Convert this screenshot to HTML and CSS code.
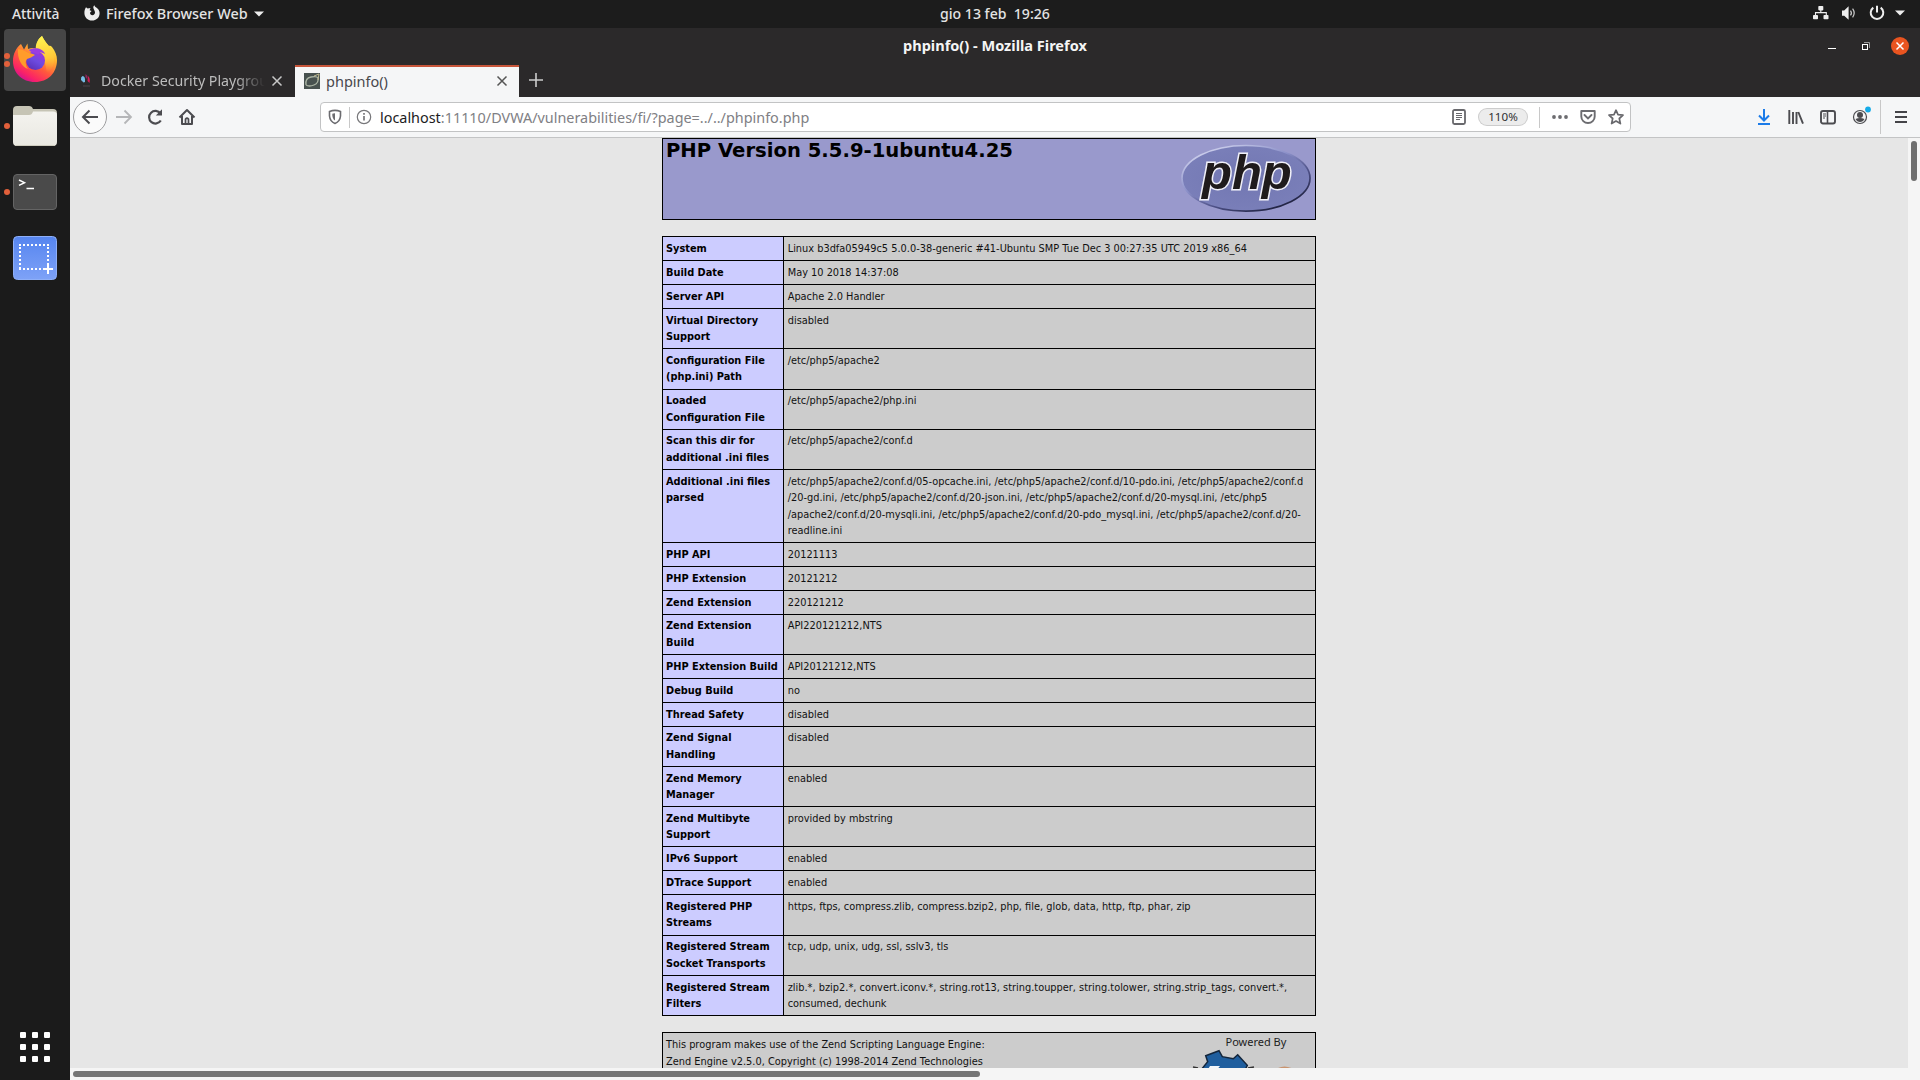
FILE: index.html
```html
<!DOCTYPE html>
<html lang="it">
<head>
<meta charset="utf-8">
<title>phpinfo() - Mozilla Firefox</title>
<link rel="stylesheet" href="styles.css">
</head>
<body>
<div class="desktop">
  <header class="topbar">
    <div class="top-left">
      <span class="activities">Attività</span>
      <svg class="ff-mono" width="16" height="16" viewBox="0 0 16 16"><path d="M2 2.2 3.6 3.6 6.5 3 5.6 5.2 7.6 6 6 7.8C6 9.3 7 10.2 8.4 10.2 10 10.2 11 9 11 7.6 11 5.6 9.4 4.6 9.3 2.6 9.3 1.5 9.8.6 10.4.2 10.7 1.6 12 2.2 13.2 3.2 14.8 4.6 15.6 6.2 15.6 8.3 15.6 12.6 12.4 15.6 8 15.6 3.7 15.6.4 12.3.4 8 .4 5.6 1 3.6 2 2.2Z" fill="#eee"/></svg>
      <span class="app-name">Firefox Browser Web</span>
      <svg class="caret" width="10" height="6" viewBox="0 0 10 6"><path d="M0 .5h10L5 5.5Z" fill="#eee"/></svg>
    </div>
    <div class="clock">gio 13 feb&nbsp; 19:26</div>
    <div class="top-right">
      <svg width="16" height="16" viewBox="0 0 16 16" fill="#eee"><rect x="5.3" y="1" width="5" height="4.4" rx=".8"/><rect x="0" y="10" width="5" height="4.3" rx=".8"/><rect x="10.5" y="10" width="5" height="4.3" rx=".8"/><path d="M2.5 10V7.6h10.8V10M7.8 5v2.6" fill="none" stroke="#eee" stroke-width="1.1"/></svg>
      <svg width="16" height="16" viewBox="0 0 16 16"><path d="M1 5.5h2.2L7.6 1.3v13.4L3.2 10.8H1Z" fill="#eee"/><path d="M9.5 5.6q1.8 2.4 0 4.8M11.6 3.6q3.2 4.4 0 8.8" fill="none" stroke="#ccc" stroke-width="1.2"/></svg>
      <svg width="16" height="16" viewBox="0 0 16 16" fill="none" stroke="#eee" stroke-width="2"><path d="M4.3 2.6A6.3 6.3 0 1 0 11.7 2.6M8 .8V7.5"/></svg>
      <svg class="last" width="10" height="6" viewBox="0 0 10 6"><path d="M0 .5h10L5 5.5Z" fill="#eee"/></svg>
    </div>
  </header>
  <div class="workspace">
    <nav class="dock">
      <div class="tile active">
        <span class="dots"><i></i><i></i></span>
        <svg class="firefox" width="46" height="48" viewBox="0 0 46 48">
          <defs>
            <linearGradient id="fox" x1=".85" y1=".1" x2=".3" y2="1"><stop offset="0" stop-color="#fff44f"/><stop offset=".3" stop-color="#ffb52e"/><stop offset=".6" stop-color="#ff5a3c"/><stop offset=".85" stop-color="#fb2465"/><stop offset="1" stop-color="#d5128f"/></linearGradient>
            <linearGradient id="flame" x1=".5" y1="0" x2=".6" y2="1"><stop offset="0" stop-color="#fff44f"/><stop offset=".6" stop-color="#ffc93a"/><stop offset="1" stop-color="#ffa130" stop-opacity="0"/></linearGradient>
            <linearGradient id="globe" x1=".8" y1="0" x2=".2" y2="1"><stop offset="0" stop-color="#a531dc"/><stop offset=".5" stop-color="#6d4be0"/><stop offset="1" stop-color="#5a2fb5"/></linearGradient>
          </defs>
          <path d="M9 9 12 14.500 15.500 8.500 16 14C20 12.500 23 13 25 14 24 8 26 4 30 1 32 5 34 8 37 11 38 10.500 39 11 40 12 43 16 45 20 45 25 45 38 36 47 23 47 10 47 1 38 1 26 1 19 4 13 9 9Z" fill="url(#fox)"/>
          <path d="M24 15C23 9 26 4 30 1 32 6 37 10 40 16 44 24 42 34 35 38 33 28 33 20 24 15Z" fill="url(#flame)"/>
          <circle cx="23.500" cy="25.500" r="9.500" fill="url(#globe)"/>
          <path d="M17 15C22 12 31 13 33 19 30 17 28 18 27 17 28 19 27 20 25 19 22 17 19 18 17 15Z" fill="#9a3de0"/>
          <path d="M6 14C11 14 14 17 17 18 19 18.500 21 18.500 23 20 20 22 18 23 15 24 13 27 14 31 16 34 10 32 5 24 6 14Z" fill="#ff9c2a"/>
          <path d="M14 25C13 33 21 38 28 35 21 38 12 34 14 25Z" fill="#ff5a3c"/>
        </svg>
      </div>
      <div class="tile">
        <span class="dots"><i></i></span>
        <svg width="46" height="42" viewBox="0 0 46 42"><defs><linearGradient id="fold" x1="0" y1="0" x2="0" y2="1"><stop offset="0" stop-color="#f4f3ef"/><stop offset="1" stop-color="#e9e8e1"/></linearGradient></defs><path d="M1 5Q1 1 5 1H17Q20 1 21 4H41Q45 4 45 8V20H1Z" fill="#c6c4b5"/><path d="M1 10H17Q20 10 21 6.500H41Q45 6.500 45 10V37Q45 41 41 41H5Q1 41 1 37Z" fill="url(#fold)"/><path d="M3 40.500H43" stroke="#cfcdbf"/></svg>
      </div>
      <div class="tile">
        <span class="dots"><i></i></span>
        <svg width="46" height="38" viewBox="0 0 46 38"><rect x="1.500" y="1.500" width="43" height="35" rx="3.500" fill="#4a4a4a" stroke="#646464"/><path d="M7 7 12.500 9.700 7 12.400M14.500 15.500H22" fill="none" stroke="#fff" stroke-width="1.500"/></svg>
      </div>
      <div class="tile">
        <svg width="46" height="46" viewBox="0 0 46 46"><defs><linearGradient id="shot" x1="0" y1="0" x2="0" y2="1"><stop offset="0" stop-color="#5685ef"/><stop offset="1" stop-color="#7ea2f7"/></linearGradient></defs><rect x="1.500" y="1.500" width="43" height="43" rx="4" fill="url(#shot)" stroke="#8eaff8"/><path d="M7 10H37M7 34H32M8 12V34M36 12V30" fill="none" stroke="#fff" stroke-width="2" stroke-dasharray="2 2"/><path d="M36 29V39M31 34H41" stroke="#fff" stroke-width="2"/></svg>
      </div>
      <div class="apps"><i></i><i></i><i></i><i></i><i></i><i></i><i></i><i></i><i></i></div>
    </nav>
    <main class="window">
      <div class="titlebar">
        <span class="window-title">phpinfo() - Mozilla Firefox</span>
        <div class="controls">
          <svg width="10" height="10" viewBox="0 0 10 10"><path d="M1 7.500H9" stroke="#fff"/></svg>
          <svg width="10" height="10" viewBox="0 0 10 10" fill="none"><path d="M3 1.500H8.500V7" stroke="#999"/><rect x="1.500" y="3.500" width="5" height="5" stroke="#fff"/></svg>
          <svg width="18" height="18" viewBox="0 0 18 18"><circle cx="9" cy="9" r="9" fill="#e95420"/><path d="M5.500 5.500 12.500 12.500M12.500 5.500 5.500 12.500" stroke="#fff" stroke-width="1.500"/></svg>
        </div>
      </div>
      <div class="tabs">
        <div class="tab">
          <svg width="16" height="16" viewBox="0 0 16 16"><path d="M3.500 3Q6.500 3 6 9L4.500 9.500 2 7Q1.500 4 3.500 3Z" fill="#73bbe4"/><path d="M6.500 1 8.500 3 8 6 6.500 4Z" fill="#8f245f"/><path d="M9 3Q11.500 5 10.500 10L8.500 8Z" fill="#cf1b58"/><path d="M4 13H11" stroke="#3b3639" stroke-width="2"/></svg>
          <span class="tab-text fade">Docker Security Playground</span>
          <svg class="close" width="12" height="12" viewBox="0 0 12 12"><path d="M1.500 1.500 10.500 10.500M10.500 1.500 1.500 10.500" stroke="#c8c8c8" stroke-width="1.500"/></svg>
        </div>
        <div class="tab selected">
          <svg width="16" height="16" viewBox="0 0 16 16"><rect width="16" height="16" fill="#47514f"/><path d="M2 12Q1 5 7 4T14 5Q15 10 10 12T2 12" fill="none" stroke="#aab4a4" stroke-width="1.300"/><path d="M10 3 15 1 14 7" fill="none" stroke="#c0ba92"/></svg>
          <span class="tab-text">phpinfo()</span>
          <svg class="close" width="12" height="12" viewBox="0 0 12 12"><path d="M1.500 1.500 10.500 10.500M10.500 1.500 1.500 10.500" stroke="#555" stroke-width="1.500"/></svg>
        </div>
        <svg class="newtab" width="16" height="16" viewBox="0 0 16 16"><path d="M8 1V15M1 8H15" stroke="#ccc" stroke-width="1.600"/></svg>
      </div>
      <div class="toolbar">
        <div class="nav-buttons">
          <span class="back"><svg width="18" height="18" viewBox="0 0 18 18" fill="none" stroke="#4c4c50" stroke-width="2"><path d="M17 9H2.500M8.500 2.500 2 9 8.500 15.500"/></svg></span>
          <svg width="18" height="18" viewBox="0 0 18 18" fill="none" stroke="#b5b6b8" stroke-width="1.800"><path d="M1 9H15.500M9.500 2.500 16 9 9.500 15.500"/></svg>
          <svg class="reload" width="18" height="18" viewBox="0 0 18 18" fill="none" stroke="#4c4c50" stroke-width="2.200"><path d="M14.800 12.500A6.300 6.300 0 1 1 14.500 5.500"/><path d="M16 1.200V7.400H9.800Z" fill="#4c4c50" stroke="none"/></svg>
          <svg width="18" height="18" viewBox="0 0 18 18" fill="none" stroke="#4c4c50" stroke-width="2" stroke-linejoin="round"><path d="M1.500 9.500 9 2 16.500 9.500M4 8V16H14V8"/><path d="M7.500 16V11Q9 9.500 10.500 11V16" stroke-width="1.700"/></svg>
        </div>
        <div class="urlbar">
          <svg class="shield" width="14" height="16" viewBox="0 0 14 16" fill="none" stroke="#6c6c70"><path d="M1.500 2.500Q7 .2 12.500 2.500V7Q12 12.500 7 14.500 2 12.500 1.500 7Z" stroke-width="1.600"/><path d="M7 4.200Q5 4.200 4.300 4.700 4 9.500 7 11.500Z" fill="#6c6c70" stroke="none"/></svg>
          <i class="sep"></i>
          <svg class="info" width="16" height="16" viewBox="0 0 16 16" fill="none"><circle cx="8" cy="8" r="6.700" stroke="#77777a" stroke-width="1.200"/><path d="M8 7V11.500M8 4V5.700" stroke="#77777a" stroke-width="1.700"/></svg>
          <span class="url">localhost<span>:11110/DVWA/vulnerabilities/fi/?page=../../phpinfo.php</span></span>
          <svg width="16" height="16" viewBox="0 0 16 16" fill="none" stroke="#68686c"><rect x="2" y="1" width="12" height="14" rx="1.500" stroke-width="1.800"/><path d="M5 4.500H11M5 6.500H11M5 8.500H11M5 10.500H9"/></svg>
          <span class="zoom">110%</span>
          <i class="sep second"></i>
          <svg class="more" width="16" height="16" viewBox="0 0 16 16" fill="#6c6c70"><circle cx="2" cy="8" r="1.900"/><circle cx="8" cy="8" r="1.900"/><circle cx="14" cy="8" r="1.900"/></svg>
          <svg class="pocket" width="16" height="16" viewBox="0 0 16 16" fill="none" stroke="#6c6c70" stroke-width="1.900"><path d="M1.300 2H14.700V7.500A6.700 6.500 0 0 1 1.300 7.500Z" stroke-linejoin="round"/><path d="M4.500 6 8 9.400 11.500 6" stroke-linecap="round"/></svg>
          <svg class="star" width="16" height="16" viewBox="0 0 16 16" fill="none" stroke="#68686c" stroke-width="1.700" stroke-linejoin="round"><path d="M8 1.200 10 5.600 15 6.100 11.300 9.500 12.400 14.600 8 12 3.600 14.600 4.700 9.500 1 6.100 6 5.600Z"/></svg>
        </div>
        <div class="tool-icons">
          <svg width="16" height="16" viewBox="0 0 16 16" fill="none" stroke="#1b7be8" stroke-width="2"><path d="M8 0V11M3 6.500 8 11.500 13 6.500M2 15H14"/></svg>
          <svg width="16" height="16" viewBox="0 0 16 16" fill="none" stroke="#4c4c50" stroke-width="1.900"><path d="M1.300 1V15M5 3V15M8.500 3V15M10.300 3 15 14.700"/></svg>
          <svg width="16" height="16" viewBox="0 0 16 16" fill="none" stroke="#4c4c50"><rect x="1" y="2" width="14" height="12.500" rx="2" stroke-width="1.900"/><path d="M7.500 2V14" stroke-width="1.600"/><path d="M3 5H6M3 7H6M3 9H5"/></svg>
          <svg class="account" width="20" height="20" viewBox="0 0 20 20"><circle cx="9" cy="11" r="6.500" fill="none" stroke="#4c4c50" stroke-width="1.200"/><circle cx="9" cy="9" r="3" fill="#4c4c50"/><path d="M4.500 13Q9 11 13.500 13 12 16 9 16T4.500 13Z" fill="#4c4c50"/><circle cx="17" cy="3.500" r="2.900" fill="#14abe8"/></svg>
          <i class="sep menu-sep"></i>
          <svg width="14" height="14" viewBox="0 0 14 14" stroke="#444448" stroke-width="2"><path d="M1 2H13M1 7H13M1 12H13"/></svg>
        </div>
      </div>
      <div class="viewport">
        <div class="page">
          <section class="banner">
            <h1>PHP Version 5.5.9-1ubuntu4.25</h1>
            <svg width="132" height="70" viewBox="0 0 132 70">
              <defs><radialGradient id="disc" cx=".5" cy=".5" r=".6"><stop offset="0" stop-color="#7277b2"/><stop offset="1" stop-color="#7b80ba"/></radialGradient><linearGradient id="rim" x1=".15" y1="0" x2=".9" y2="1"><stop offset="0" stop-color="#d8daf2"/><stop offset=".4" stop-color="#8a8fc8"/><stop offset=".65" stop-color="#4c4f85"/><stop offset="1" stop-color="#101228"/></linearGradient></defs>
              <ellipse cx="66" cy="34.300" rx="64" ry="32.800" fill="url(#disc)" stroke="url(#rim)" stroke-width="1.700"/>
              <text class="php-word" x="22" y="45">php</text>
            </svg>
          </section>
          <section class="info-table">
            <div class="row"><b>System</b><span>Linux b3dfa05949c5 5.0.0-38-generic #41-Ubuntu SMP Tue Dec 3 00:27:35 UTC 2019 x86_64</span></div>
            <div class="row"><b>Build Date</b><span>May 10 2018 14:37:08</span></div>
            <div class="row"><b>Server API</b><span>Apache 2.0 Handler</span></div>
            <div class="row two"><b>Virtual Directory<br>Support</b><span>disabled</span></div>
            <div class="row two plus"><b>Configuration File<br>(php.ini) Path</b><span>/etc/php5/apache2</span></div>
            <div class="row two high"><b>Loaded<br>Configuration File</b><span>/etc/php5/apache2/php.ini</span></div>
            <div class="row two high"><b>Scan this dir for<br>additional .ini files</b><span>/etc/php5/apache2/conf.d</span></div>
            <div class="row four"><b>Additional .ini files<br>parsed</b><span>/etc/php5/apache2/conf.d/05-opcache.ini, /etc/php5/apache2/conf.d/10-pdo.ini, /etc/php5/apache2/conf.d<br>/20-gd.ini, /etc/php5/apache2/conf.d/20-json.ini, /etc/php5/apache2/conf.d/20-mysql.ini, /etc/php5<br>/apache2/conf.d/20-mysqli.ini, /etc/php5/apache2/conf.d/20-pdo_mysql.ini, /etc/php5/apache2/conf.d/20-<br>readline.ini</span></div>
            <div class="row"><b>PHP API</b><span>20121113</span></div>
            <div class="row"><b>PHP Extension</b><span>20121212</span></div>
            <div class="row"><b>Zend Extension</b><span>220121212</span></div>
            <div class="row two high"><b>Zend Extension<br>Build</b><span>API220121212,NTS</span></div>
            <div class="row"><b>PHP Extension Build</b><span>API20121212,NTS</span></div>
            <div class="row"><b>Debug Build</b><span>no</span></div>
            <div class="row"><b>Thread Safety</b><span>disabled</span></div>
            <div class="row two high"><b>Zend Signal<br>Handling</b><span>disabled</span></div>
            <div class="row two"><b>Zend Memory<br>Manager</b><span>enabled</span></div>
            <div class="row two"><b>Zend Multibyte<br>Support</b><span>provided by mbstring</span></div>
            <div class="row"><b>IPv6 Support</b><span>enabled</span></div>
            <div class="row"><b>DTrace Support</b><span>enabled</span></div>
            <div class="row two plus"><b>Registered PHP<br>Streams</b><span>https, ftps, compress.zlib, compress.bzip2, php, file, glob, data, http, ftp, phar, zip</span></div>
            <div class="row two high"><b>Registered Stream<br>Socket Transports</b><span>tcp, udp, unix, udg, ssl, sslv3, tls</span></div>
            <div class="row two"><b>Registered Stream<br>Filters</b><span>zlib.*, bzip2.*, convert.iconv.*, string.rot13, string.toupper, string.tolower, string.strip_tags, convert.*,<br>consumed, dechunk</span></div>
          </section>
          <section class="zend">
            <p>This program makes use of the Zend Scripting Language Engine:<br>Zend Engine v2.5.0, Copyright (c) 1998-2014 Zend Technologies</p>
            <svg width="129" height="60" viewBox="0 0 129 60">
              <text class="powered" x="39.500" y="12.700">Powered By</text>
              <path d="M15 37 21.700 28.700 19.700 22.700 33 17.700 36.300 23.700 47.300 25.700 51.700 21.700 61.300 32.300 59 37Z" fill="#1f5e9e" stroke="#14263c" stroke-width="1.500"/>
              <path d="M24 33H34L30 38H21Z" fill="#f2f6fa"/><path d="M7 34 12 35M62 35 68 34" stroke="#333" stroke-width="1.500"/>
              <path d="M89 37Q98 30 109 37Z" fill="#c9946f"/>
            </svg>
          </section>
        </div>
        <div class="vscroll"><i></i></div>
        <div class="hscroll"><i></i></div>
      </div>
    </main>
  </div>
</div>
</body>
</html>
```
FILE: styles.css
```css
* { box-sizing: border-box; }
body { margin: 0; overflow: hidden; background: #1b1b1b; font-family: "Noto Sans", "Open Sans", sans-serif; }
svg { display: block; flex: none; }
.desktop { width: 1920px; height: 1080px; display: flex; flex-direction: column; }

.topbar { height: 28px; flex: none; display: grid; grid-template-columns: 940px 1fr auto; background: #1c1c1c; color: #e4e4e4; font-size: 14.4px; font-weight: 500; line-height: 27px; white-space: nowrap; }
.top-left { display: flex; padding-left: 12px; }
.activities { width: 72px; font-size: 13.8px; }
.ff-mono { margin-top: 5px; }
.app-name { width: 154px; padding-left: 6px; }
.caret { margin-top: 11px; }
.clock { font-size: 14.1px; }
.top-right { display: flex; align-items: center; gap: 12px; padding: 0 15px 2px 0; }
.top-right .last { margin-left: -2px; }

.workspace { flex: 1; min-height: 0; display: flex; }
.dock { width: 70px; display: flex; flex-direction: column; align-items: center; padding-top: 1px; background: #1b1b1b; }
.tile { width: 62px; height: 62px; margin-bottom: 4px; display: grid; grid-template-columns: 8px 46px 8px; align-items: center; border-radius: 4px; }
.tile.active { background: #464646; }
.tile > svg { grid-column: 2; }
.firefox { margin-top: -2px; }
.dots { grid-column: 1; display: flex; flex-direction: column; gap: 2px; }
.dots i { width: 6px; height: 6px; border-radius: 50%; background: #e2603b; }
.apps { margin: auto 0 18px; display: grid; grid-template-columns: repeat(3, 6px); gap: 6px; }
.apps i { width: 6px; height: 6px; border-radius: 1px; background: #fff; }

.window { flex: 1; min-width: 0; display: flex; flex-direction: column; background: #2b292a; }
.titlebar { height: 37px; flex: none; display: grid; grid-template-columns: 833px 1fr auto; color: #f5f5f5; }
.window-title { grid-column: 2; font-size: 14.55px; font-weight: 700; line-height: 34px; }
.controls { display: flex; align-items: center; gap: 20px; padding: 0 11px 2px 0; }
.controls svg:first-child { margin-right: 4px; }
.tabs { height: 32px; flex: none; display: flex; }
.tab { width: 225px; display: flex; align-items: center; padding: 0 12px 2px 9px; border-top: 2px solid transparent; color: #bdbdbd; font-size: 14.2px; }
.tab.selected { width: 224px; padding-right: 11px; border-top-color: #c7553a; background: #f5f6f7; color: #48484c; font-size: 14.5px; }
.tab-text { flex: 1; margin-left: 6px; overflow: hidden; white-space: nowrap; line-height: 24px; }
.tab:first-child .tab-text { margin-right: 6px; }
.fade { -webkit-mask-image: linear-gradient(to right, #000 82%, transparent); mask-image: linear-gradient(to right, #000 82%, transparent); }
.newtab { margin: 7px 0 0 9px; }

.toolbar { height: 41px; flex: none; display: flex; align-items: center; padding: 0 12px 0 3px; border-bottom: 1px solid #c3c4c5; background: #f5f6f7; }
.nav-buttons { width: 247px; display: flex; align-items: center; gap: 14px; }
.back { width: 34px; height: 34px; display: flex; align-items: center; justify-content: center; border: 1px solid #9d9d9f; border-radius: 50%; background: #fbfbfb; margin-right: -6px; }
.reload { margin-left: -1px; }
.urlbar { width: 1311px; height: 30px; display: flex; align-items: center; padding: 0 6px 0 7px; border: 1px solid #c2c3c4; border-radius: 4px; background: #fff; }
.sep { width: 1px; height: 21px; background: #c8c8c8; flex: none; }
.shield { margin-right: 7px; }
.info { margin: 0 8px 0 6px; }
.url { flex: 1; color: #1c1c1e; font-size: 14.4px; line-height: 26px; padding-top: 1px; white-space: nowrap; }
.url span { color: #808084; }
.zoom { width: 48px; height: 16px; margin: 0 12px; border-radius: 8px; background: #ececec; box-shadow: 0 0 0 1px #ccc; color: #303030; font-size: 11.6px; line-height: 15px; text-align: center; }
.more { margin: 0 12px; }
.star { margin-left: 12px; }
.tool-icons { flex: 1; display: flex; align-items: center; justify-content: flex-end; gap: 16px; }
.account { margin: -3px -7px 0 -1px; }
.menu-sep { height: 34px; margin-right: -3px; }

.viewport { flex: 1; min-height: 0; display: grid; grid-template-columns: 1fr 12px; grid-template-rows: 1fr 12px; background: #f5f5f5; }
.page { min-height: 0; overflow: hidden; background: #e6e6e6; padding-left: 592px; font: 9.81px/16px "DejaVu Sans", sans-serif; color: #000; }
.banner { width: 654px; height: 82px; display: flex; justify-content: space-between; border: 1px solid #000; background: #9999cc; padding: 5px 3px 0 3px; }
.banner h1 { margin: -5px 0 0; font-size: 19.63px; line-height: 24px; white-space: nowrap; }
.php-word { font: italic 700 49px "Liberation Sans", Arial, sans-serif; fill: #1f1b1c; stroke: #f0f0f8; stroke-width: 3px; paint-order: stroke; }
.info-table { width: 654px; margin-top: 16px; border: 1px solid #000; border-bottom: 0; background: #ccc; }
.row { height: 24px; display: grid; grid-template-columns: 121px 1fr; border-bottom: 1px solid #000; white-space: nowrap; }
.row.two { height: 40px; }
.row.two.plus { height: 41px; }
.row.four { height: 73px; line-height: 16.3px; }
.row b { padding: 4px 0 0 3px; border-right: 1px solid #000; background: #ccccff; }
.row span { padding: 4px 0 0 3.7px; color: #111; }
.row.high { line-height: 16.2px; }
.row.high b, .row.high span { padding-top: 3.4px; }
.zend { width: 654px; height: 80px; margin-top: 16px; display: flex; justify-content: space-between; border: 1px solid #000; background: #ccc; color: #111; }
.zend p { margin: 3px 0 0 3px; line-height: 17px; }
.powered { font: 11px "Noto Sans", sans-serif; fill: #222; }
.vscroll { padding: 3px; }
.vscroll i { display: block; width: 6px; height: 40px; border-radius: 3px; background: #6f6f6f; }
.hscroll { padding: 3px; }
.hscroll i { display: block; width: 907px; height: 6px; border-radius: 3px; background: #757575; }
```
